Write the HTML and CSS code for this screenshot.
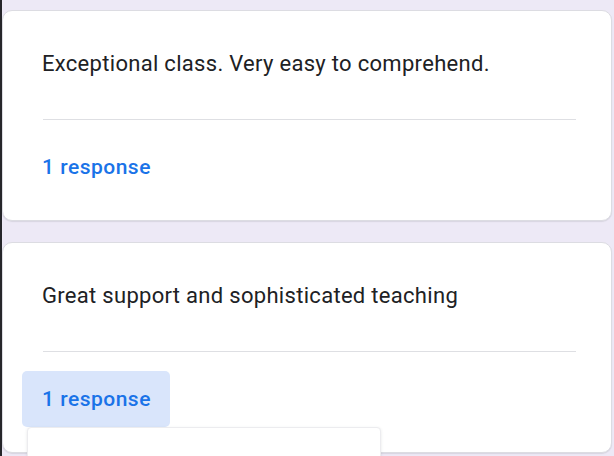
FILE: index.html
```html
<!DOCTYPE html>
<html>
<head>
<meta charset="utf-8">
<link rel="stylesheet" href="styles.css">
</head>
<body>
<div class="page">
  <div class="card">
    <div class="answer">Exceptional class. Very easy to comprehend.</div>
    <div class="divider"></div>
    <div class="count">1 response</div>
  </div>
  <div class="card">
    <div class="answer">Great support and sophisticated teaching</div>
    <div class="divider"></div>
    <div class="count-wrap">
      <div class="count hover">1 response</div>
      <div class="popup"></div>
    </div>
  </div>
</div>
</body>
</html>
```
FILE: styles.css
```css
html, body {
  margin: 0;
  padding: 0;
  height: 100%;
  overflow: hidden;
}
body {
  background: #ede9f6;
  font-family: Roboto, "Liberation Sans", sans-serif;
  border-left: 2px solid #26262a;
  box-sizing: border-box;
}
.page {
  display: flex;
  flex-direction: column;
  gap: 21px;
  padding: 10px 2px 0 0;
}
.card {
  background: #fff;
  border: 1px solid #dcdce2;
  border-radius: 10px;
  box-shadow: 0 1px 1px rgba(60, 64, 67, 0.12);
  height: 211px;
  box-sizing: border-box;
  padding: 0 35px 0 19px;
  display: flex;
  flex-direction: column;
}
.answer {
  margin: 39px 0 0 20px;
  font-size: 22px;
  line-height: 28px;
  color: #202124;
  letter-spacing: 0.3px;
}
.divider {
  margin: 41px 0 0 21px;
  height: 1px;
  background: #dedfe3;
}
.count-wrap {
  position: relative;
  align-self: flex-start;
  margin-top: 19px;
}
.count {
  align-self: flex-start;
  margin-top: 19px;
  height: 56px;
  line-height: 56px;
  padding: 0 19px 0 20px;
  border-radius: 5px;
  font-size: 21px;
  font-weight: 500;
  letter-spacing: 0.5px;
  color: #1a73e8;
}
.count-wrap .count {
  margin-top: 0;
}
.hover {
  background: #d9e5fb;
}
.popup {
  position: absolute;
  left: 5px;
  top: 56px;
  width: 352px;
  height: 40px;
  background: #fff;
  border: 1px solid #ececef;
  border-radius: 4px;
  box-shadow: 0 1px 3px rgba(60, 64, 67, 0.12);
}
```
